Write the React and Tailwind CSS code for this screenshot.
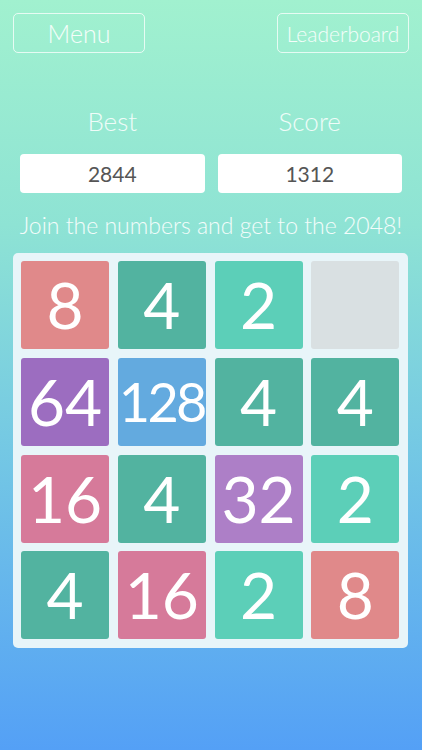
import React from 'react';

const TILE_STYLES = {
  2: 'bg-[#5ccfb8]',
  4: 'bg-[#52b3a0]',
  8: 'bg-[#e0898a]',
  16: 'bg-[#d67a9a]',
  32: 'bg-[#ad7fc7]',
  64: 'bg-[#9c6dc0]',
  128: 'bg-[#63aadf]',
};

const board = [
  [8, 4, 2, 0],
  [64, 128, 4, 4],
  [16, 4, 32, 2],
  [4, 16, 2, 8],
];

function Tile({ value }) {
  if (!value) {
    return <div className="w-[88px] h-[88px] rounded-[3px] bg-[#d9e0e2]" />;
  }
  const size = value >= 100 ? 'text-[54px] tracking-[-0.05em]' : 'text-[64px]';
  return (
    <div
      className={`w-[88px] h-[88px] rounded-[3px] flex items-center justify-center text-white font-normal leading-none ${TILE_STYLES[value]} ${size}`}
    >
      {value}
    </div>
  );
}

export default function App() {
  return (
    <div
      className="w-[422px] h-[750px] flex flex-col bg-[linear-gradient(180deg,#a1f1cf_0%,#8ee3d4_30%,#74c8e4_60%,#54a0f6_100%)]"
      style={{ fontFamily: 'Lato, "Open Sans", sans-serif' }}
    >
      {/* top buttons */}
      <div className="flex justify-between px-[13px] pt-[13px]">
        <button className="w-[132px] h-[40px] rounded-[5px] border-[1.5px] border-white/75 text-white/90 text-[25px] font-light leading-none">
          Menu
        </button>
        <button className="w-[132px] h-[40px] rounded-[5px] border-[1.5px] border-white/75 text-white/90 text-[21px] font-light leading-none">
          Leaderboard
        </button>
      </div>

      {/* scores */}
      <div className="flex px-[20px] gap-[13px] mt-[53px]">
        <div className="flex-1 flex flex-col items-center">
          <div className="h-[30px] flex items-center text-[26px] font-light text-white/85">Best</div>
          <div className="mt-[18px] w-full h-[39px] rounded-[4px] bg-white flex items-center justify-center text-[21px] text-[#555]">
            2844
          </div>
        </div>
        <div className="flex-1 flex flex-col items-center">
          <div className="h-[30px] flex items-center text-[26px] font-light text-white/85">Score</div>
          <div className="mt-[18px] w-full h-[39px] rounded-[4px] bg-white flex items-center justify-center text-[21px] text-[#555]">
            1312
          </div>
        </div>
      </div>

      <div className="mt-[17px] h-[30px] flex items-center justify-center text-[23px] font-light text-white/90 whitespace-nowrap">
        Join the numbers and get to the 2048!
      </div>

      {/* board */}
      <div className="mt-[13px] mx-[13px] w-[395px] h-[395px] rounded-[5px] bg-[#e8f5f9] p-[8px] grid grid-cols-4 gap-[8px]">
        {board.flat().map((v, i) => (
          <Tile key={i} value={v} />
        ))}
      </div>
    </div>
  );
}
